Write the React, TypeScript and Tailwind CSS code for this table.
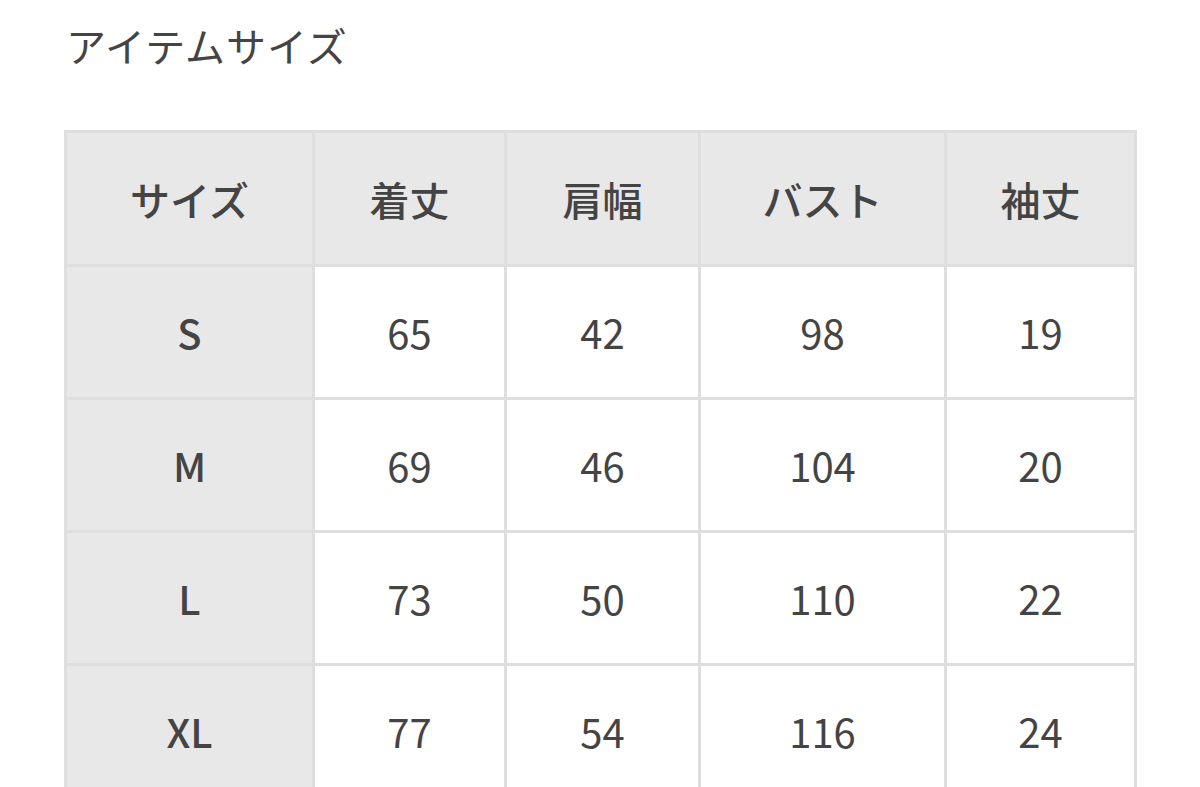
const headers = ["サイズ", "着丈", "肩幅", "バスト", "袖丈"];

const rows = [
  { size: "S", values: [65, 42, 98, 19] },
  { size: "M", values: [69, 46, 104, 20] },
  { size: "L", values: [73, 50, 110, 22] },
  { size: "XL", values: [77, 54, 116, 24] },
];

export default function App() {
  return (
    <div
      className="w-[1200px] h-[787px] overflow-hidden bg-white text-[#444]"
      style={{ fontFamily: '"Noto Sans CJK JP", "Noto Sans", sans-serif' }}
    >
      {/* Title */}
      <h1 className="pl-[66px] pt-[21px] text-[40px] leading-[48px] font-normal tracking-[1px]">
        アイテムサイズ
      </h1>

      {/* Size table */}
      <div className="mt-[61px] ml-[64px] w-fit grid grid-cols-[245px_189px_191px_243px_187px] gap-[3px] p-[3px] bg-[#dedede]">
        {headers.map((h) => (
          <div
            key={h}
            className="h-[131px] flex items-center justify-center bg-[#e8e8e8] text-[40px] font-medium"
          >
            {h}
          </div>
        ))}
        {rows.map((row) => (
          <>
            <div
              key={row.size}
              className="h-[130px] flex items-center justify-center bg-[#e8e8e8] text-[40px] font-medium"
            >
              {row.size}
            </div>
            {row.values.map((v, i) => (
              <div
                key={row.size + i}
                className="h-[130px] flex items-center justify-center bg-white text-[40px] font-normal"
              >
                {v}
              </div>
            ))}
          </>
        ))}
      </div>
    </div>
  );
}
